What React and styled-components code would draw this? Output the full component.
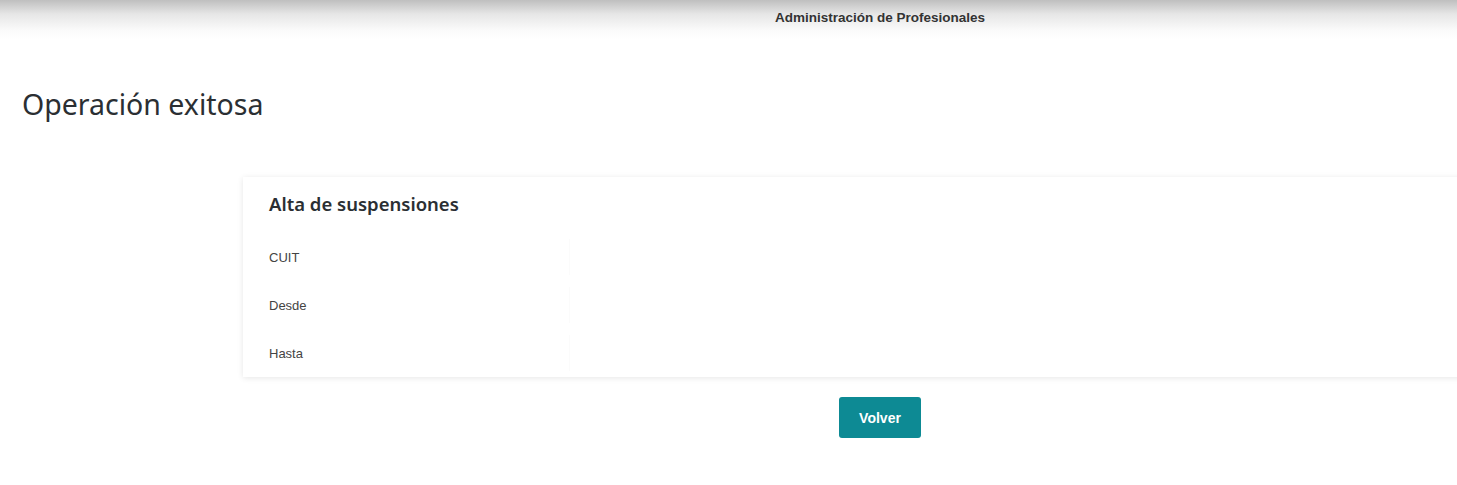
import React from "react";
import styled, { createGlobalStyle } from "styled-components";

const Global = createGlobalStyle`
  html, body { margin: 0; padding: 0; background: #fff; overflow: hidden; }
  body { width: 1457px; }
`;

const Page = styled.div`
  width: 1457px;
  height: 485px;
  overflow: hidden;
  font-family: "Liberation Sans", Arial, sans-serif;
`;

const Header = styled.header`
  height: 40px;
  background: linear-gradient(to bottom, #bfbfbf 0%, #e6e6e6 35%, #fafafa 75%, #ffffff 100%);
`;

const Column = styled.div`
  margin-left: 243px;
  width: 1274px;
  display: flex;
  flex-direction: column;
  align-items: ${(p) => (p.$center ? "center" : "stretch")};
`;

const HeaderTitle = styled.div`
  text-align: center;
  padding-top: 10px;
  font-size: 13.5px;
  font-weight: bold;
  color: #333;
`;

const PageTitle = styled.h1`
  margin: 44px 0 0 22px;
  font-family: "Noto Sans", "Open Sans", sans-serif;
  font-weight: 400;
  font-size: 28.5px;
  line-height: 40px;
  color: #2b2f33;
`;

const Card = styled.section`
  margin-top: 53px;
  background: #fff;
  box-shadow: 0 1px 6px rgba(0, 0, 0, 0.1);
  padding: 13px 0 0 26px;
`;

const CardTitle = styled.h2`
  margin: 0 0 15px 0;
  font-family: "Noto Sans", "Open Sans", sans-serif;
  font-weight: 600;
  font-size: 18.5px;
  line-height: 28px;
  color: #2b2f33;
`;

const Row = styled.div`
  display: flex;
  height: 48px;
  align-items: center;
`;

const Label = styled.div`
  width: 300px;
  height: 36px;
  display: flex;
  align-items: center;
  font-size: 13px;
  color: #444;
  border-right: 1px solid #fbfbfb;
`;

const Button = styled.button`
  margin-top: 20px;
  width: 82px;
  height: 41px;
  border: none;
  border-radius: 3px;
  background: #0d8a94;
  color: #fff;
  font-family: "Liberation Sans", Arial, sans-serif;
  font-weight: bold;
  font-size: 14px;
  cursor: pointer;
`;

export default function App() {
  return (
    <Page>
      <Global />
      <Header>
        <Column>
          <HeaderTitle>Administración de Profesionales</HeaderTitle>
        </Column>
      </Header>
      <PageTitle>Operación exitosa</PageTitle>
      <Column>
        <Card>
          <CardTitle>Alta de suspensiones</CardTitle>
          <Row><Label>CUIT</Label></Row>
          <Row><Label>Desde</Label></Row>
          <Row><Label>Hasta</Label></Row>
        </Card>
      </Column>
      <Column $center>
        <Button>Volver</Button>
      </Column>
    </Page>
  );
}
